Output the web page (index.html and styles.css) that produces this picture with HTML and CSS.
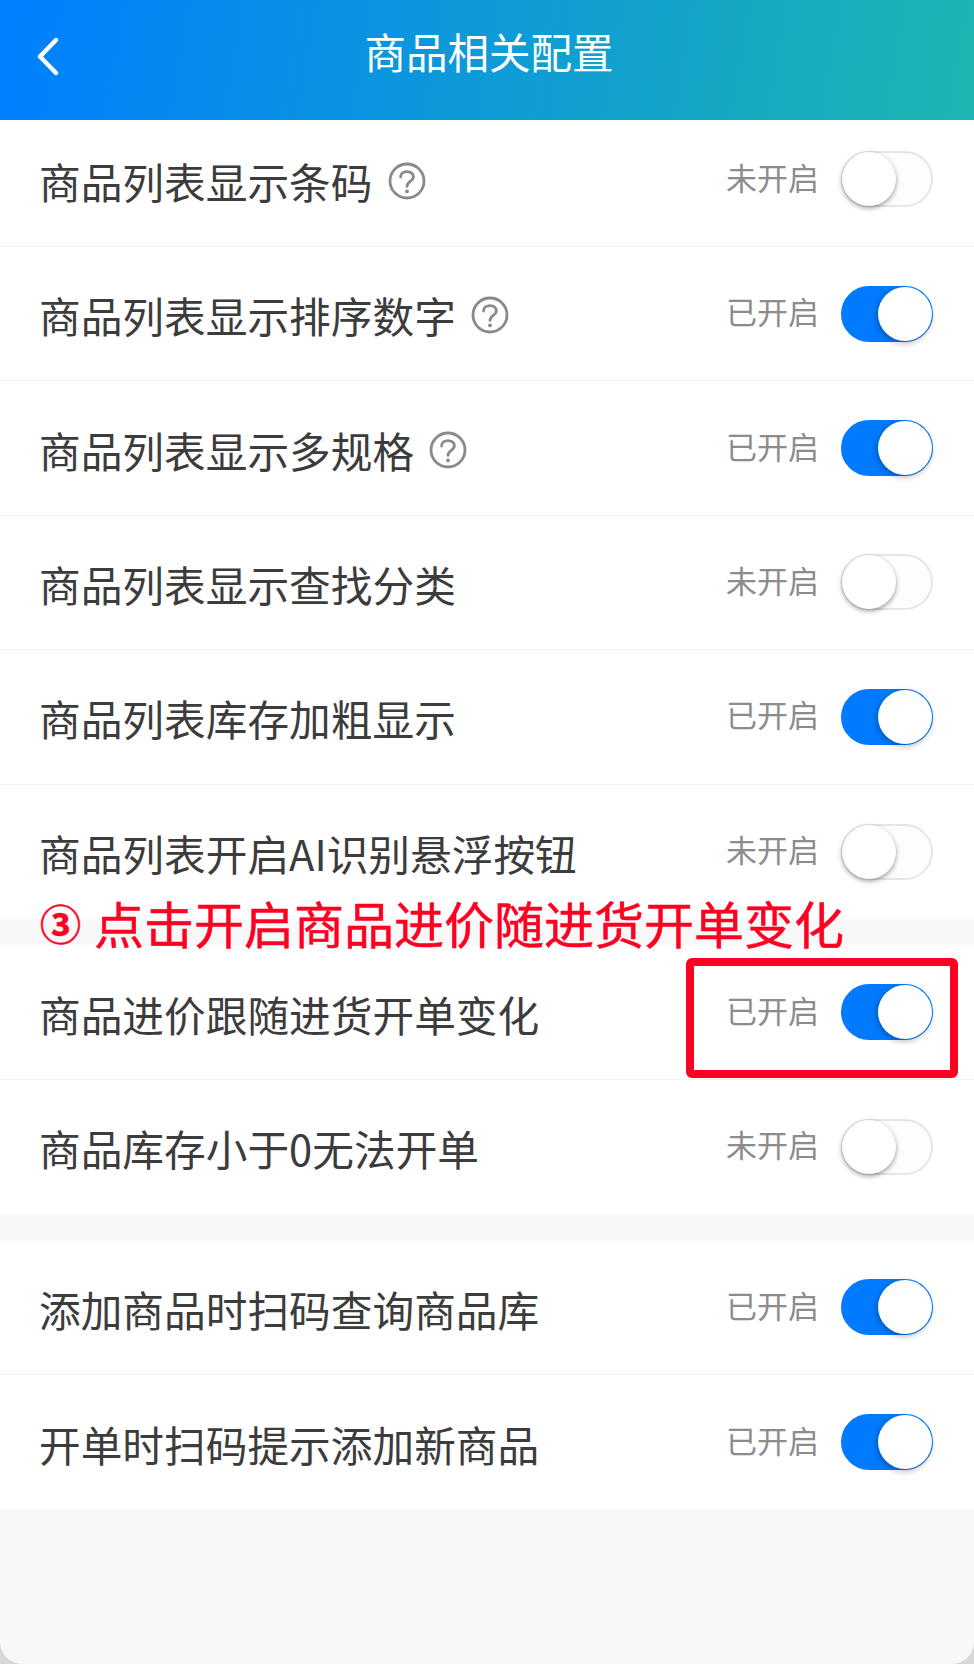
FILE: index.html
```html
<!DOCTYPE html>
<html lang="zh-CN">

<head>
  <meta charset="UTF-8">
  <meta name="viewport" content="width=device-width, initial-scale=1.0">
  <title>商品相关配置</title>
  <link rel="stylesheet" href="styles.css">
</head>

<body>

  <div class="screen">
    <header class="topbar">
      <svg class="back-icon" width="30" height="40" viewBox="0 0 30 40" aria-hidden="true">
        <path d="M22 4 L6 20.5 L22 37" fill="none" stroke="#fff" stroke-width="4.4" stroke-linecap="round" stroke-linejoin="round" />
      </svg>
      <h1>商品相关配置</h1>
    </header>

    <div class="group group-first">
      <div class="row">
        <div class="label">商品列表显示条码
          <svg class="help" width="38" height="38" viewBox="0 0 38 38" aria-hidden="true">
            <circle cx="19" cy="19" r="17" fill="none" stroke="#8a8a8a" stroke-width="2.8" />
            <path d="M12.6 15 C12.6 7.8 25.4 7.8 25.4 14.8 C25.4 19.4 19 19.6 19 24.4" fill="none" stroke="#8a8a8a" stroke-width="2.8" stroke-linecap="round" />
            <circle cx="19" cy="29.4" r="1.9" fill="#8a8a8a" />
          </svg>
        </div>
        <div class="state"><span>未开启</span><i class="switch"></i></div>
      </div>
      <div class="row">
        <div class="label">商品列表显示排序数字
          <svg class="help" width="38" height="38" viewBox="0 0 38 38" aria-hidden="true">
            <circle cx="19" cy="19" r="17" fill="none" stroke="#8a8a8a" stroke-width="2.8" />
            <path d="M12.6 15 C12.6 7.8 25.4 7.8 25.4 14.8 C25.4 19.4 19 19.6 19 24.4" fill="none" stroke="#8a8a8a" stroke-width="2.8" stroke-linecap="round" />
            <circle cx="19" cy="29.4" r="1.9" fill="#8a8a8a" />
          </svg>
        </div>
        <div class="state"><span>已开启</span><i class="switch on"></i></div>
      </div>
      <div class="row">
        <div class="label">商品列表显示多规格
          <svg class="help" width="38" height="38" viewBox="0 0 38 38" aria-hidden="true">
            <circle cx="19" cy="19" r="17" fill="none" stroke="#8a8a8a" stroke-width="2.8" />
            <path d="M12.6 15 C12.6 7.8 25.4 7.8 25.4 14.8 C25.4 19.4 19 19.6 19 24.4" fill="none" stroke="#8a8a8a" stroke-width="2.8" stroke-linecap="round" />
            <circle cx="19" cy="29.4" r="1.9" fill="#8a8a8a" />
          </svg>
        </div>
        <div class="state"><span>已开启</span><i class="switch on"></i></div>
      </div>
      <div class="row">
        <div class="label">商品列表显示查找分类</div>
        <div class="state"><span>未开启</span><i class="switch"></i></div>
      </div>
      <div class="row">
        <div class="label">商品列表库存加粗显示</div>
        <div class="state"><span>已开启</span><i class="switch on"></i></div>
      </div>
      <div class="row">
        <div class="label">商品列表开启AI识别悬浮按钮</div>
        <div class="state"><span>未开启</span><i class="switch"></i></div>
      </div>
    </div>

    <div class="group">
      <div class="row">
        <div class="label">商品进价跟随进货开单变化</div>
        <div class="state"><span>已开启</span><i class="switch on"></i></div>
      </div>
      <div class="row">
        <div class="label">商品库存小于0无法开单</div>
        <div class="state"><span>未开启</span><i class="switch"></i></div>
      </div>
    </div>

    <div class="group">
      <div class="row">
        <div class="label">添加商品时扫码查询商品库</div>
        <div class="state"><span>已开启</span><i class="switch on"></i></div>
      </div>
      <div class="row">
        <div class="label">开单时扫码提示添加新商品</div>
        <div class="state"><span>已开启</span><i class="switch on"></i></div>
      </div>
    </div>

    <div class="note"><b>③</b><span>点击开启商品进价随进货开单变化</span></div>
    <div class="mark"></div>
  </div>

</body>

</html>
```

FILE: styles.css
```css
html,
body {
  margin: 0;
  padding: 0;
}

body {
  background-color: #d8d8d8;
  font-family: "Noto Sans CJK SC", "Noto Sans", sans-serif;
}

.screen {
  position: relative;
  height: 1664px;
  overflow: hidden;
  background-color: #f8f8f8;
  border-radius: 0 0 22px 22px;
}

.topbar {
  position: relative;
  z-index: 1;
  height: 120px;
  display: flex;
  align-items: center;
  justify-content: center;
  padding-left: 4px;
  background: linear-gradient(100deg, #007fff 0%, #1cb6b0 100%);
}

.topbar h1 {
  margin: 0 0 16px;
  font-size: 41.5px;
  font-weight: 400;
  line-height: 1;
  color: #fff;
}

.back-icon {
  position: absolute;
  left: 34px;
  top: 36px;
}

.group {
  margin-bottom: 26.4px;
  background-color: #fff;
}

.group-first {
  margin-top: -7.4px;
}

.row {
  height: 134.4px;
  box-sizing: border-box;
  padding: 0 41px 0 39px;
  display: flex;
  align-items: center;
  justify-content: space-between;
  border-bottom: 1px solid #f2f2f2;
}

.row:last-child {
  border-bottom: 0;
}

.label {
  display: flex;
  align-items: center;
  gap: 15px;
  margin-top: 3px;
  font-size: 41.7px;
  line-height: 56px;
  color: #3c3c3c;
}

.help {
  flex: none;
}

.state {
  display: flex;
  align-items: center;
  gap: 22px;
  font-size: 31px;
  line-height: 40px;
  color: #8c8c8c;
}

.state span {
  margin-bottom: 5px;
}

.switch {
  position: relative;
  display: block;
  width: 92px;
  height: 56px;
  box-sizing: border-box;
  border: 2px solid #e6e6e6;
  border-radius: 28px;
  background-color: #fdfdfd;
}

.switch::after {
  content: "";
  position: absolute;
  left: -1px;
  top: -1px;
  width: 54px;
  height: 54px;
  border-radius: 50%;
  background-color: #fff;
  box-shadow: 0 2px 5px rgba(0, 0, 0, 0.4);
}

.switch.on {
  border-color: #007aff;
  background-color: #007aff;
}

.switch.on::after {
  left: auto;
  right: -1px;
  box-shadow: -1px 2px 6px rgba(0, 0, 0, 0.3);
}

/* annotation drawn over the screenshot */
.note {
  position: absolute;
  left: 40px;
  top: 887px;
  display: flex;
  align-items: center;
  gap: 13px;
  font-size: 50px;
  line-height: 70px;
  white-space: nowrap;
  color: #ff0022;
  -webkit-text-stroke: 0.5px #ff0022;
}

.note b {
  font-size: 41px;
  font-weight: 700;
}

.mark {
  position: absolute;
  left: 686px;
  top: 958px;
  width: 272px;
  height: 120px;
  box-sizing: border-box;
  border: 8px solid #ff0022;
  border-radius: 6px;
}
```
